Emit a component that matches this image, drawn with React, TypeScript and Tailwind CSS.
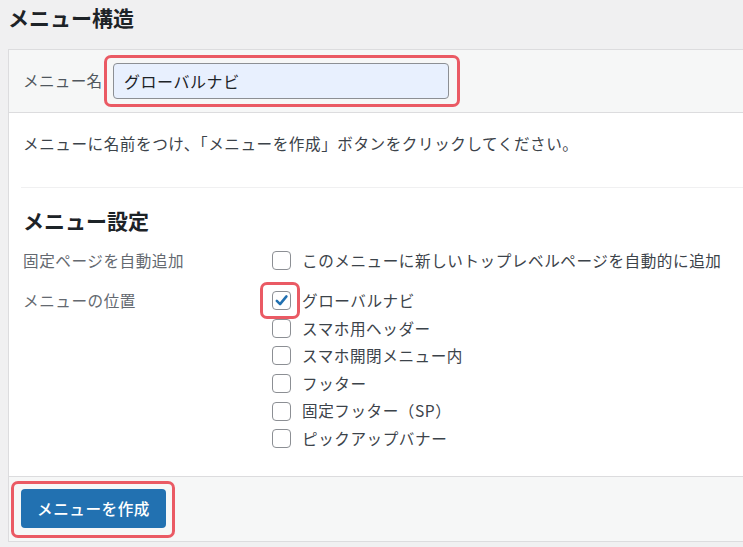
const font = "font-['Noto_Sans_CJK_JP','Noto_Sans',sans-serif]";

const Highlight = ({ className }: { className: string }) => (
  <span
    className={`pointer-events-none absolute rounded-[7px] border-[3px] border-[#ea5a64] ${className}`}
  />
);

const Checkbox = ({ checked = false }: { checked?: boolean }) => (
  <span className="relative flex h-[19px] w-[19px] shrink-0 items-center justify-center rounded-[4px] border border-[#8c8f94] bg-white">
    {checked && (
      <svg viewBox="0 0 20 20" className="h-[17px] w-[17px]">
        <path
          d="M4.5 10.5 L8.3 14.2 L15.8 5.2"
          fill="none"
          stroke="#2271b1"
          strokeWidth="3"
          strokeLinecap="round"
          strokeLinejoin="round"
        />
      </svg>
    )}
    {checked && <Highlight className="-left-[13px] -right-[10px] -top-[10px] -bottom-[10px]" />}
  </span>
);

const Option = ({ label, checked }: { label: string; checked?: boolean }) => (
  <label className="flex h-[27.6px] items-center gap-[11px]">
    <Checkbox checked={checked} />
    <span>{label}</span>
  </label>
);

const locations = [
  { label: "グローバルナビ", checked: true },
  { label: "スマホ用ヘッダー" },
  { label: "スマホ開閉メニュー内" },
  { label: "フッター" },
  { label: "固定フッター（SP）" },
  { label: "ピックアップバナー" },
];

export default function App() {
  return (
    <div className={`h-[547px] w-[743px] overflow-hidden bg-[#f0f0f1] text-[15.6px] tracking-[0.55px] text-[#3c434a] ${font}`}>
      <h2 className="h-[49px] pl-[8px] pt-[2px] text-[21px] font-bold leading-[30px] tracking-normal text-[#1d2327]">
        メニュー構造
      </h2>

      <div className="ml-[8px] border border-r-0 border-[#dcdcde] bg-white">
        {/* header */}
        <div className="flex h-[63px] items-center border-b border-[#dcdcde] bg-[#f6f7f7] pl-[14px]">
          <span className="w-[90px] tracking-[0.3px] text-[#50575e]">メニュー名</span>
          <div className="relative">
            <div className="flex h-[36px] w-[336px] items-center rounded-[4px] border border-[#8c8f94] bg-[#e8f0fe] px-[10px] text-[16px] text-[#1d2327]">
              グローバルナビ
            </div>
            <Highlight className="-left-[9px] -right-[11px] -top-[8px] -bottom-[8px]" />
          </div>
        </div>

        {/* body */}
        <div className="pl-[12px] pt-[18px] pb-[23px]">
          <p className="pl-[2px] leading-[24px]">
            メニューに名前をつけ、「メニューを作成」ボタンをクリックしてください。
          </p>
          <div className="mt-[32px] border-t border-[#f0f0f1]" />
          <h3 className="mt-[18px] pl-[2px] text-[21px] font-bold leading-[28px] tracking-normal text-[#1d2327]">
            メニュー設定
          </h3>
          <div className="mt-[13px] grid grid-cols-[249px_1fr] gap-y-[12.4px] pl-[2px]">
            <div className="flex h-[27.6px] items-center text-[#646970]">固定ページを自動追加</div>
            <div>
              <Option label="このメニューに新しいトップレベルページを自動的に追加" />
            </div>
            <div className="flex h-[27.6px] items-center text-[#646970]">メニューの位置</div>
            <div className="flex flex-col">
              {locations.map((l) => (
                <Option key={l.label} label={l.label} checked={l.checked} />
              ))}
            </div>
          </div>
        </div>

        {/* footer */}
        <div className="flex h-[65px] items-center border-t border-[#dcdcde] bg-[#f6f7f7] pl-[12px]">
          <div className="relative">
            <button className="flex h-[39px] w-[145px] items-center justify-center rounded-[4px] bg-[#2271b1] text-[15.6px] font-medium text-white">
              メニューを作成
            </button>
            <Highlight className="-left-[10px] -right-[9px] -top-[8px] -bottom-[10px]" />
          </div>
        </div>
      </div>
    </div>
  );
}
